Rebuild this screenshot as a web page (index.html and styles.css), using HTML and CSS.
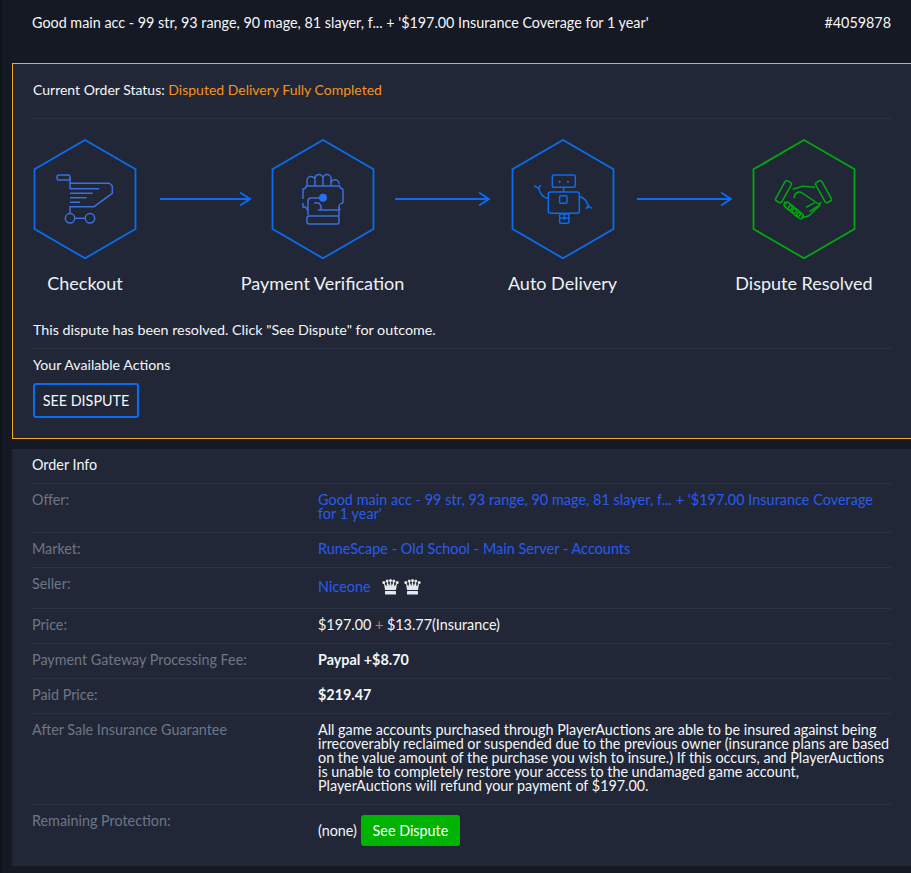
FILE: index.html
```html
<!DOCTYPE html>
<html lang="en">
<head>
  <meta charset="UTF-8" />
  <title>Order #4059878</title>
  <link rel="stylesheet" href="styles.css">
</head>
<body>

  <div class="order-head">
    <span>Good main acc - 99 str, 93 range, 90 mage, 81 slayer, f... + '$197.00 Insurance Coverage for 1 year'</span>
    <span>#4059878</span>
  </div>

  <div class="status-box">
    <div class="status-line">Current Order Status: <span class="orange">Disputed Delivery Fully Completed</span></div>

    <div class="steps">
      <div class="step">
        <svg class="hex" viewBox="0 0 104 120">
          <polygon points="52,1 102.5,30.3 102.5,90 52,119.3 1.5,90 1.5,30.3" />
          <g class="glyph">
            <rect x="24" y="36" width="13" height="5" rx="1.5" />
            <path d="M37 38V44.3H76.5L79.3 47V54.3L61 67.7H37V74.5" />
            <path d="M37 44.3V50M37 49.7H66M37 54.3H59.7M37 58.7H53.7M37 63.3H47" />
            <circle cx="37" cy="79.3" r="4.7" />
            <circle cx="57" cy="79.3" r="4.7" />
            <path d="M41.7 79.3H52.3" />
          </g>
        </svg>
        <div class="step-name">Checkout</div>
      </div>
      <svg class="arrow arrow-one" viewBox="0 0 91 20"><path d="M0 10H90M80 3.5L90 10L80 16.5" /></svg>

      <div class="step">
        <svg class="hex" viewBox="0 0 104 120">
          <polygon points="52,1 102.5,30.3 102.5,90 52,119.3 1.5,90 1.5,30.3" />
          <g class="glyph">
            <path d="M36 47V41.5a4 4 0 0 1 8 0V47M44 40a4 4 0 0 1 8-1V47M52 39.5a4 4 0 0 1 8 0V47M60 44a4 4 0 0 1 8 1.5" />
            <path d="M35 47H69M72 50V64M69 71H47M69 47a3 3 0 0 0 3 3M72 64a4 4 0 0 0-4 4L69 71M35 47a3 3 0 0 1-3 3V60M32 64V68a3 3 0 0 1 4 3" />
            <path d="M37 71V62a3 3 0 0 1 3-3H48M43 64H48L50 67V71" />
            <path d="M37 71V76M68 68V77" />
            <rect x="36" y="77" width="32" height="8" rx="2" />
          </g>
          <circle class="glyph-dot" cx="52" cy="58.7" r="4" />
        </svg>
        <div class="step-name">Payment Verification</div>
      </div>
      <svg class="arrow arrow-two" viewBox="0 0 95 20"><path d="M0 10H94M84 3.5L94 10L84 16.5" /></svg>

      <div class="step">
        <svg class="hex" viewBox="0 0 104 120">
          <polygon points="52,1 102.5,30.3 102.5,90 52,119.3 1.5,90 1.5,30.3" />
          <g class="glyph robot">
            <rect x="41.3" y="36" width="23" height="12.3" rx="1.5" />
            <path d="M52.6 48.3V53" />
            <rect x="37.3" y="53" width="31" height="21.3" rx="2" />
            <rect x="48.6" y="56.7" width="7.4" height="7.6" rx="1" />
            <path d="M37.3 59.3C32 59 28 54 27.6 47.7M23 46.7L27.6 49.5L29.6 46" />
            <path d="M68.3 57.7C73 58 77 63 77.6 69.3M75 70L77 66.5L81 69.5" />
            <rect x="48.6" y="75" width="9.4" height="9.3" rx="1.5" />
            <path d="M48.6 79H58M53.3 75V81" />
          </g>
          <circle class="glyph-eye" cx="48.6" cy="42.7" r="1" />
          <circle class="glyph-eye" cx="57" cy="42.7" r="1" />
        </svg>
        <div class="step-name">Auto Delivery</div>
      </div>
      <svg class="arrow arrow-three" viewBox="0 0 95 20"><path d="M0 10H94M84 3.5L94 10L84 16.5" /></svg>

      <div class="step">
        <svg class="hex hex-green" viewBox="0 0 104 120">
          <polygon points="52,1 102.5,30.3 102.5,90 52,119.3 1.5,90 1.5,30.3" />
          <g class="glyph shake">
            <rect x="-3.5" y="-11.5" width="7" height="23" rx="2" transform="translate(31.5 52.7) rotate(29)" />
            <rect x="-3.5" y="-11.5" width="7" height="23" rx="2" transform="translate(71.5 52.7) rotate(-29)" />
            <path d="M40.7 50.3L50.7 47.3L63 48.3" />
            <path d="M42.3 59.3C42 55 46 51 50.7 54.3L68 66L57.3 76.5C55 78 51 78.5 49.5 77.5" />
            <path d="M32.3 62.7L35 65M69 63L67 65" />
            <path d="M54 68.3L63 63.7M57.3 72.7L66.3 67" />
            <rect x="-4.5" y="-2.7" width="9" height="5.4" rx="2.7" transform="translate(36.2 67) rotate(45)" />
            <rect x="-4.5" y="-2.7" width="9" height="5.4" rx="2.7" transform="translate(40.4 70.3) rotate(45)" />
            <rect x="-4.5" y="-2.7" width="9" height="5.4" rx="2.7" transform="translate(44.3 73.5) rotate(45)" />
            <rect x="-3.5" y="-2.7" width="7" height="5.4" rx="2.7" transform="translate(48 76.5) rotate(45)" />
          </g>
        </svg>
        <div class="step-name">Dispute Resolved</div>
      </div>
    </div>

    <div class="status-note">This dispute has been resolved. Click "See Dispute" for outcome.</div>
    <div class="actions-title">Your Available Actions</div>
    <button class="btn-outline">SEE DISPUTE</button>
  </div>

  <div class="info-panel">
    <div class="info-title">Order Info</div>

    <div class="info-row">
      <div class="info-label">Offer:</div>
      <div class="info-value"><a class="link">Good main acc - 99 str, 93 range, 90 mage, 81 slayer, f... + '$197.00 Insurance Coverage for 1 year'</a></div>
    </div>
    <div class="info-row">
      <div class="info-label">Market:</div>
      <div class="info-value"><a class="link">RuneScape - Old School - Main Server - Accounts</a></div>
    </div>
    <div class="info-row">
      <div class="info-label">Seller:</div>
      <div class="info-value seller">
        <a class="link">Niceone</a>
        <span class="crowns">
          <svg class="crown" viewBox="0 0 17 16"><circle cx="1.8" cy="3.5" r="1.5" /><circle cx="5.2" cy="2" r="1.5" /><circle cx="8.5" cy="1.5" r="1.5" /><circle cx="11.8" cy="2" r="1.5" /><circle cx="15.2" cy="3.5" r="1.5" /><path d="M1.8 3.5L4.5 7.5L5.2 2L7.3 7L8.5 1.5L9.7 7L11.8 2L12.5 7.5L15.2 3.5L14 11H3Z" /><rect x="3" y="12" width="11" height="3.5" rx=".5" /></svg>
          <svg class="crown" viewBox="0 0 17 16"><circle cx="1.8" cy="3.5" r="1.5" /><circle cx="5.2" cy="2" r="1.5" /><circle cx="8.5" cy="1.5" r="1.5" /><circle cx="11.8" cy="2" r="1.5" /><circle cx="15.2" cy="3.5" r="1.5" /><path d="M1.8 3.5L4.5 7.5L5.2 2L7.3 7L8.5 1.5L9.7 7L11.8 2L12.5 7.5L15.2 3.5L14 11H3Z" /><rect x="3" y="12" width="11" height="3.5" rx=".5" /></svg>
        </span>
      </div>
    </div>
    <div class="info-row">
      <div class="info-label">Price:</div>
      <div class="info-value">$197.00 <span class="plus">+</span> $13.77(Insurance)</div>
    </div>
    <div class="info-row">
      <div class="info-label">Payment Gateway Processing Fee:</div>
      <div class="info-value"><b>Paypal +$8.70</b></div>
    </div>
    <div class="info-row">
      <div class="info-label">Paid Price:</div>
      <div class="info-value"><b>$219.47</b></div>
    </div>
    <div class="info-row">
      <div class="info-label">After Sale Insurance Guarantee</div>
      <div class="info-value">All game accounts purchased through PlayerAuctions are able to be insured against being irrecoverably reclaimed or suspended due to the previous owner (insurance plans are based on the value amount of the purchase you wish to insure.) If this occurs, and PlayerAuctions is unable to completely restore your access to the undamaged game account, PlayerAuctions will refund your payment of $197.00.</div>
    </div>
    <div class="info-row last-row">
      <div class="info-label">Remaining Protection:</div>
      <div class="info-value"><span>(none)</span> <button class="btn-green">See Dispute</button></div>
    </div>
  </div>

</body>
</html>
```

FILE: styles.css
```css
body {
  margin: 0;
  font-family: 'Lato', sans-serif;
  font-size: 14.35px;
  line-height: 14px;
  background-color: #151924;
  color: #f4f6fa;
  overflow-x: hidden;
  height: 873px;
  box-shadow: inset 2px 0 0 #10131b;
}

.order-head {
  display: flex;
  justify-content: space-between;
  padding: 16px 20px 0 32px;
  height: 63px;
  box-sizing: border-box;
}

.status-box {
  margin-left: 12px;
  width: 920px;
  height: 376px;
  box-sizing: border-box;
  padding: 19px 20px;
  background-color: #212736;
  border: 1px solid #f5a623;
}

.orange {
  color: #f7931e;
}

.status-line {
  padding-bottom: 21px;
  border-bottom: 1px solid #2b3242;
  width: 859px;
  font-size: 14px;
}

.steps {
  display: flex;
  margin-top: 20px;
}

.step {
  display: flex;
  flex-direction: column;
  align-items: center;
  flex: none;
  width: 104px;
}

.hex {
  width: 104px;
  height: 120px;
}

.hex polygon {
  fill: none;
  stroke: #0a6cf0;
  stroke-width: 1.8;
}

.hex-green polygon {
  stroke: #00a80f;
}

.glyph {
  fill: none;
  stroke: #3a6fdc;
  stroke-width: 1.5;
}

.robot {
  stroke: #0a6cf0;
}

.shake {
  stroke: #00a80f;
}

.glyph-dot {
  fill: #2a6ff0;
}

.glyph-eye {
  fill: #3a6fdc;
}

.step-name {
  margin-top: 14px;
  font-size: 18px;
  line-height: 20px;
  white-space: nowrap;
  color: #eef1f6;
}

.arrow {
  flex: none;
  width: 95px;
  height: 20px;
  margin-top: 50px;
}

.arrow path {
  fill: none;
  stroke: #0a6cf0;
  stroke-width: 1.8;
}

.arrow-one {
  width: 91px;
  margin-left: 23px;
  margin-right: 19.5px;
}

.arrow-two {
  margin-left: 20.5px;
  margin-right: 20.5px;
}

.arrow-three {
  margin-left: 22.5px;
  margin-right: 20px;
}

.status-note {
  margin-top: 30px;
  padding-bottom: 11px;
  border-bottom: 1px solid #2b3242;
  width: 859px;
  font-size: 14.3px;
}

.actions-title {
  margin-top: 9px;
  font-size: 14.2px;
}

.btn-outline {
  display: block;
  margin-top: 11px;
  height: 35px;
  width: 106px;
  padding: 0;
  background: none;
  border: 2px solid #0a6cf0;
  border-radius: 3px;
  color: #f4f6fa;
  font-family: inherit;
  font-size: 14.35px;
}

.info-panel {
  margin: 10px 0 0 12px;
  height: 417px;
  box-sizing: border-box;
  padding: 0 20px;
  background-color: #212736;
}

.info-title {
  height: 34px;
  padding-top: 9px;
  box-sizing: border-box;
}

.info-row {
  display: grid;
  grid-template-columns: 286px 1fr;
  padding: 9px 0 11px;
  border-top: 1px solid #2b3242;
}

.info-label {
  color: #6e7686;
}

.link {
  color: #2a5bf0;
  letter-spacing: .06px;
}

.plus {
  color: #ff5a5a;
}

.seller {
  display: flex;
  align-items: center;
  height: 20px;
}

.crowns {
  display: flex;
  gap: 5px;
  margin-left: 11px;
}

.crown {
  width: 17px;
  height: 16px;
  fill: #e4e8ec;
}

.last-row {
  padding-top: 10px;
}

.last-row .info-label {
  margin-top: -1px;
}

.last-row .info-value {
  display: flex;
  align-items: center;
  gap: 4px;
}

.btn-green {
  height: 31px;
  width: 99px;
  padding: 0;
  border: none;
  border-radius: 3px;
  background-color: #00b300;
  color: #fff;
  font-family: inherit;
  font-size: 14.35px;
}
```
